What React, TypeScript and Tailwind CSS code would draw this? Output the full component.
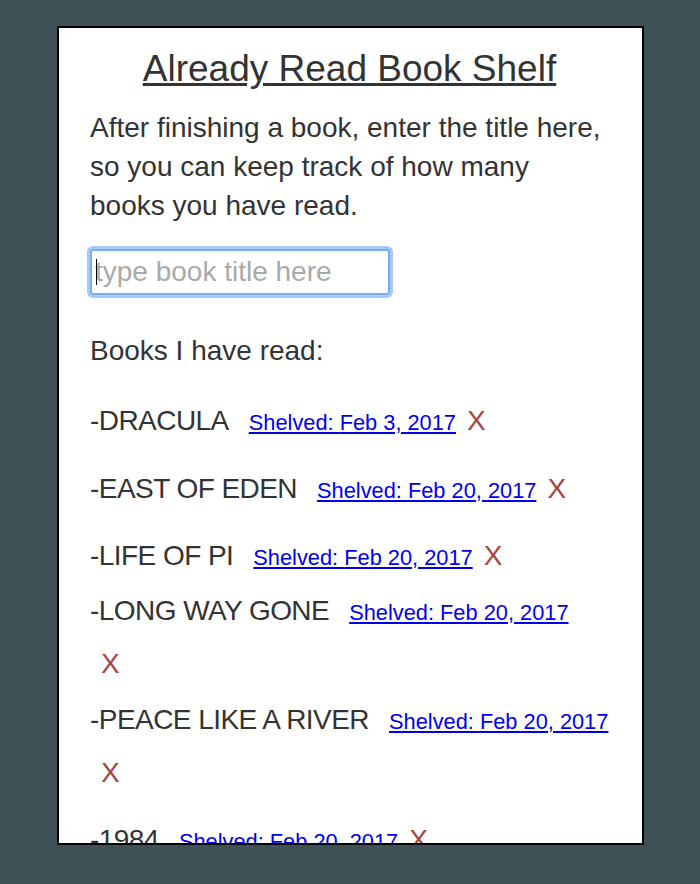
import React from "react";

type Book = { title: string; date: string; gap: string };

const books: Book[] = [
  { title: "DRACULA", date: "Feb 3, 2017", gap: "mt-[24px]" },
  { title: "EAST OF EDEN", date: "Feb 20, 2017", gap: "mt-[15px]" },
  { title: "LIFE OF PI", date: "Feb 20, 2017", gap: "mt-[14px]" },
  { title: "LONG WAY GONE", date: "Feb 20, 2017", gap: "mt-[2px]" },
  { title: "PEACE LIKE A RIVER", date: "Feb 20, 2017", gap: "mt-[3px]" },
  { title: "1984", date: "Feb 20, 2017", gap: "mt-[14px]" },
];

function BookRow({ book }: { book: Book }) {
  return (
    <div className={`${book.gap} leading-[53px]`}>
      <span className="whitespace-nowrap tracking-[-0.55px]">-{book.title}</span>
      <a
        href="#"
        className="ml-[20px] whitespace-nowrap text-[21.8px] leading-none text-[#0000ee] underline"
      >
        Shelved: {book.date}
      </a>
      <button className="ml-[5px] pl-[6px] pr-[14px] text-[28px] leading-none text-[#a94442]">X</button>
    </div>
  );
}

export default function App() {
  return (
    <div className="min-h-[884px] bg-[#3e5157] pt-[26px] pl-[57px] font-['Liberation_Sans',Arial,sans-serif] text-[#333]">
      <div className="h-[819px] w-[587px] overflow-hidden border-2 border-black bg-white pl-[31px] pr-[33px]">
        <h1 className="mt-[20px] text-center text-[37px] leading-[42px] underline">
          Already Read Book Shelf
        </h1>
        <p className="mt-[18px] text-[28px] leading-[39.2px]">
          After finishing a book, enter the title here, so you can keep track of how many books you have read.
        </p>
        <div className="relative mt-[23px] w-[300px]">
          <input
            type="text"
            placeholder="type book title here"
            className="h-[46px] w-[300px] rounded-[3px] border-2 border-[#7aaaf0] pl-[3px] text-[28px] caret-transparent outline-none ring-[3px] ring-[#a6caf8] placeholder:text-[#a9a9a9]"
          />
          <span className="absolute left-[6px] top-[10px] h-[26px] w-[1px] bg-black" />
        </div>
        <p className="mt-[36px] text-[28px] leading-[39.2px]">Books I have read:</p>
        <div className="text-[28px]">
          {books.map((b) => (
            <BookRow key={b.title} book={b} />
          ))}
        </div>
      </div>
    </div>
  );
}
